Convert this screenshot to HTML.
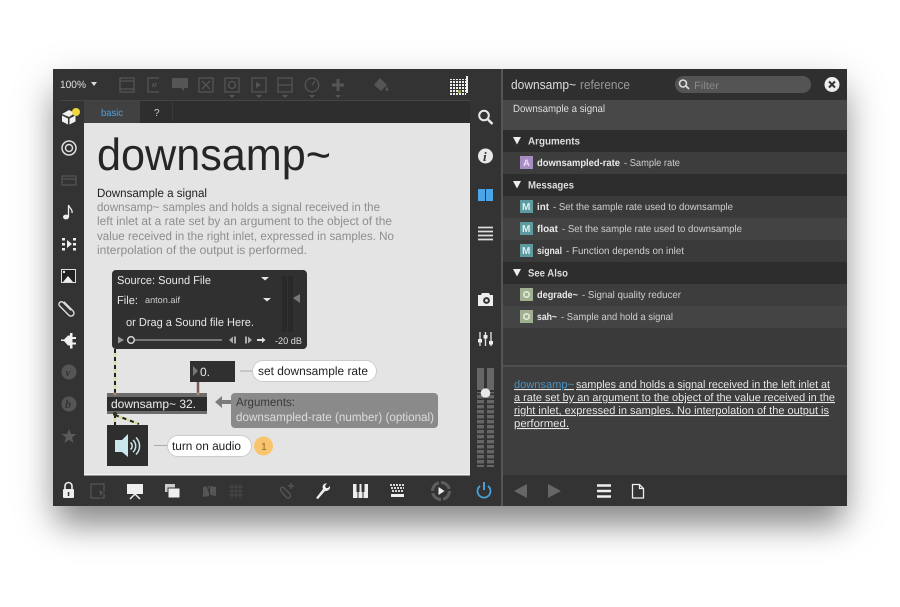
<!DOCTYPE html>
<html><head><meta charset="utf-8">
<style>
html,body{margin:0;padding:0;background:#fff;width:900px;height:607px;overflow:hidden}
#s{position:absolute;left:53px;top:69px;width:794px;height:437px;box-shadow:0 24px 28px -6px rgba(0,0,0,.3),0 14px 38px rgba(0,0,0,.26)}
svg{position:absolute;left:0;top:0;filter:blur(.35px)}
text{font-family:"Liberation Sans",sans-serif}
</style></head><body>
<div id="s"></div>
<svg width="900" height="607" viewBox="0 0 900 607" xmlns="http://www.w3.org/2000/svg" text-rendering="geometricPrecision">
<defs>
<pattern id="g" width="3" height="3" patternUnits="userSpaceOnUse"><rect width="2" height="2" fill="#eee"/></pattern>
<pattern id="m" width="4" height="5" patternUnits="userSpaceOnUse"><rect width="4" height="3.400" fill="#666"/></pattern>
</defs>
<!-- window -->
<rect x="53" y="69" width="794" height="437" fill="#333"/>
<rect x="60" y="100" width="410" height="1" fill="#454545"/>
<rect x="84" y="101" width="386" height="22" fill="#2e2e2e"/>
<rect x="84" y="101" width="56" height="22" fill="#414141"/>
<rect x="172" y="102" width="1" height="19" fill="#3a3a3a"/>
<rect x="84" y="123" width="386" height="352" fill="#e4e4e4"/>
<rect x="84" y="474" width="386" height="1.500" fill="#f4f4f4"/>
<rect x="501" y="69" width="2" height="437" fill="#555"/>
<!-- toolbar -->
<text x="60" y="88" font-size="10.500" fill="#e0e0e0" textLength="26" lengthAdjust="spacingAndGlyphs">100%</text>
<path d="M91 82h6l-3 4z" fill="#ddd"/>
<g fill="none" stroke="#555" stroke-width="1.300">
<rect x="120" y="78" width="14" height="14"/><path d="M120 81h14M120 89h14"/>
<path d="M159 78h-11v14h11"/><path d="M152 87l2-4M154.500 87l2-4" />
<rect x="199" y="78" width="14" height="14"/><path d="M202 81l8 8M210 81l-8 8"/>
<rect x="225" y="78" width="14" height="14"/><circle cx="232" cy="85" r="3.500"/>
<rect x="252" y="78" width="14" height="14"/>
<rect x="278" y="78" width="14" height="14"/><path d="M278 85h14"/>
<circle cx="312" cy="85" r="6.800"/><path d="M312 85l3-4"/>
</g>
<g fill="#555">
<path d="M172 78h16v10h-4v3l-3-3h-9z"/>
<path d="M256 82l5 3-5 3z"/>
<path d="M229 95h6l-3 3zM256 95h6l-3 3zM282 95h6l-3 3zM309 95h6l-3 3zM335 95h6l-3 3z"/>
<path d="M336.500 79h3v4.500h4.500v3h-4.500v4.500h-3v-4.500h-4.500v-3h4.500z"/>
<path d="M380 78l7 7-6 6-7-6zM387 86l1.500 3.500a1.500 1.500 0 1 1-3 0z"/>
</g>
<rect x="449" y="79" width="17" height="17" fill="url(#g)"/>
<rect x="466" y="76" width="2" height="17" fill="#eee"/>
<rect x="458" y="90" width="3" height="3" fill="#9a9a50"/>
<!-- tabs -->
<text x="101" y="116" font-size="10" fill="#4fa3dc" textLength="22" lengthAdjust="spacingAndGlyphs">basic</text>
<text x="154" y="116" font-size="10" fill="#ccc">?</text>
<!-- left sidebar -->
<path d="M62 114l7-4 6 3-6 4zM62 115.500l6 3v6l-6-3zM69.500 118.500l6-3v6l-6 3z" fill="#f0f0f0"/>
<circle cx="76" cy="112" r="4" fill="#f2d53c"/>
<g fill="none" stroke="#ddd" stroke-width="1.500"><circle cx="69" cy="148" r="7"/><circle cx="69" cy="148" r="3.500"/></g>
<g fill="none" stroke="#555" stroke-width="1.300"><rect x="62" y="176" width="14" height="9"/><path d="M62 179h14"/></g>
<ellipse cx="66" cy="217" rx="3" ry="2.400" fill="#eee"/><path d="M68.500 217v-12c.5 3 4.500 4 3.500 8" fill="none" stroke="#eee" stroke-width="1.300"/>
<path d="M62 238h3v2.500h-3zM62 243h3v2.500h-3zM62 248h3v2.500h-3zM73 238h3v2.500h-3zM73 243h3v2.500h-3zM73 248h3v2.500h-3zM67 240l5 4-5 4z" fill="#eee"/>
<rect x="61.500" y="269.500" width="14" height="13" fill="#222" stroke="#ddd"/><path d="M63 282l5-6 5 6z" fill="#eee"/><circle cx="64" cy="272" r="1.200" fill="#eee"/>
<path transform="translate(68.500,308.500) rotate(45)" d="M-8 -1.500h13a3 3 0 0 1 0 6h-13a2.500 2.500 0 0 1 0-5h11" fill="none" stroke="#ddd" stroke-width="1.400"/>
<path d="M61 339.500h3l4-4h2v-2.500h2.500v4h3.500v2h-3.500v3.500h3.500v2h-3.500v4h-2.500v-3h-2l-4-4.500h-3z" fill="#f0f0f0"/>
<circle cx="69" cy="372" r="7.500" fill="#555"/><text x="65.500" y="376" font-size="11" font-style="italic" font-weight="bold" fill="#333" style="font-family:'Liberation Serif',serif">v</text>
<circle cx="69" cy="404" r="7.500" fill="#555"/><text x="65" y="408" font-size="12" font-style="italic" font-weight="bold" fill="#333" style="font-family:'Liberation Serif',serif">b</text>
<path d="M69 429l2 5h5.500l-4.500 3.500 1.700 5.500-4.700-3.300-4.700 3.300 1.700-5.500-4.500-3.500h5.500z" fill="#5a5a5a"/>
<!-- patcher text -->
<text x="97" y="170" font-size="45" fill="#262626" textLength="234" lengthAdjust="spacingAndGlyphs">downsamp~</text>
<text x="97" y="197" font-size="12" fill="#222" textLength="110" lengthAdjust="spacingAndGlyphs">Downsample a signal</text>
<g font-size="12" fill="#8e8e8e">
<text x="97" y="211" textLength="283" lengthAdjust="spacingAndGlyphs">downsamp~ samples and holds a signal received in the</text>
<text x="97" y="225" textLength="295" lengthAdjust="spacingAndGlyphs">left inlet at a rate set by an argument to the object of the</text>
<text x="97" y="240" textLength="297" lengthAdjust="spacingAndGlyphs">value received in the right inlet, expressed in samples. No</text>
<text x="97" y="254" textLength="210" lengthAdjust="spacingAndGlyphs">interpolation of the output is performed.</text>
</g>
<!-- patch cords -->
<path d="M115 349v44M115 414v11M115 415l24 9" stroke="#d8dc9c" stroke-width="2.500" fill="none"/>
<path d="M115 349v44M115 414v11M115 415l24 9" stroke="#222" stroke-width="2" stroke-dasharray="4 4" fill="none"/>
<path d="M198 382v11" stroke="#7a5a5a" stroke-width="2.500"/>
<!-- playlist box -->
<rect x="112" y="270" width="195" height="79" rx="4" fill="#303030"/>
<g fill="#e6e6e6">
<text x="117" y="284" font-size="11.500" textLength="94" lengthAdjust="spacingAndGlyphs">Source: Sound File</text>
<text x="117" y="304" font-size="11.500" textLength="21" lengthAdjust="spacingAndGlyphs">File:</text>
<text x="145" y="303" font-size="9" textLength="35" lengthAdjust="spacingAndGlyphs" fill="#ccc">anton.aif</text>
<text x="126" y="326" font-size="11.500" textLength="128" lengthAdjust="spacingAndGlyphs">or Drag a Sound file Here.</text>
<text x="275" y="344" font-size="9.500" textLength="27" lengthAdjust="spacingAndGlyphs" fill="#ddd">-20 dB</text>
<path d="M261 277h8l-4 3.500zM263 298h8l-4 3.500z"/>
</g>
<rect x="282" y="276" width="11" height="56" fill="#292929"/>
<path d="M287.500 276v56" stroke="#333" stroke-width="1"/>
<path d="M293 298l7-4v9z" fill="#777"/>
<path d="M118 336.500l6 3.500-6 3.500z" fill="#999"/>
<rect x="135" y="339" width="87" height="2" fill="#777"/>
<circle cx="131" cy="340" r="3.300" fill="#303030" stroke="#ddd" stroke-width="1.400"/>
<path d="M236 336.500v7h-2v-7zM233 336.500v7l-4-3.500z" fill="#aaa"/>
<path d="M245 336.500h2v7h-2zM248 336.500v7l4-3.500z" fill="#aaa"/>
<path d="M257 339h5v-2l3.500 3-3.500 3v-2h-5z" fill="#ddd"/>
<!-- number box -->
<rect x="190" y="361" width="45" height="21" fill="#303030"/>
<path d="M193 366l5 5-5 5z" fill="#777"/>
<text x="200" y="376" font-size="12" fill="#e8e8e8">0.</text>
<path d="M240 371h14" stroke="#aaa"/>
<rect x="252.500" y="360.500" width="124" height="21" rx="10.500" fill="#fff" stroke="#ccc"/>
<text x="258" y="375" font-size="12" fill="#222" textLength="110" lengthAdjust="spacingAndGlyphs">set downsample rate</text>
<!-- object box -->
<rect x="107" y="393" width="100" height="21" fill="#6c6c6c"/>
<rect x="107" y="397" width="100" height="14" fill="#2c2c2c"/>
<circle cx="115" cy="394" r="1.500" fill="#a87"/><circle cx="198" cy="394" r="1.500" fill="#a87"/><circle cx="115" cy="414" r="2" fill="#332"/>
<text x="111" y="408" font-size="12" fill="#eee" textLength="85" lengthAdjust="spacingAndGlyphs">downsamp~ 32.</text>
<!-- comment -->
<path d="M215 402l7-6v4h9v4h-9v4z" fill="#7c7c7c"/>
<rect x="231" y="393" width="207" height="35" rx="4" fill="#8a8a8a"/>
<text x="236" y="406" font-size="12" fill="#3a3a3a" textLength="59" lengthAdjust="spacingAndGlyphs">Arguments:</text>
<text x="236" y="421" font-size="12" fill="#dcdcdc" textLength="198" lengthAdjust="spacingAndGlyphs">downsampled-rate (number) (optional)</text>
<!-- speaker -->
<rect x="107" y="425" width="41" height="41" fill="#2e2e2e"/>
<path d="M115 440h7l6-6v23l-6-5h-7z" fill="#c9e6ea"/>
<g fill="none" stroke="#c9e6ea" stroke-width="1.500"><path d="M130.500 442.500a4.500 4.500 0 0 1 0 7M133 440a8 8 0 0 1 0 12M136 437.500a12 12 0 0 1 0 17"/></g>
<path d="M154 445.500h14" stroke="#aaa"/>
<rect x="167.500" y="435.500" width="84" height="21" rx="10.500" fill="#fff" stroke="#ccc"/>
<text x="172" y="450" font-size="12" fill="#222" textLength="69" lengthAdjust="spacingAndGlyphs">turn on audio</text>
<circle cx="263.500" cy="446" r="9.500" fill="#f8c56e"/>
<text x="261" y="450" font-size="10.500" fill="#8a6a28">1</text>
<!-- right sidebar -->
<g fill="none" stroke="#e8e8e8" stroke-width="2"><circle cx="484" cy="115.500" r="4.800"/><path d="M488 119.500l4.500 4.500" stroke-width="2.500"/></g>
<circle cx="485.500" cy="156" r="7.500" fill="#e8e8e8"/><text x="483" y="161" font-size="13" font-style="italic" font-weight="bold" fill="#333" style="font-family:'Liberation Serif',serif">i</text>
<rect x="478" y="189" width="7" height="12" fill="#4aa6e8"/><rect x="486" y="189" width="7" height="12" fill="#4aa6e8"/>
<path d="M478 227.500h15M478 231.500h15M478 235.500h15M478 239.500h15" stroke="#ddd" stroke-width="1.800"/>
<path d="M478 295h3l1-2h7l1 2h3v11h-15z" fill="#eee"/><circle cx="486.500" cy="300.500" r="3.400" fill="#333"/><circle cx="486.500" cy="300.500" r="1.400" fill="#eee"/>
<path d="M480 332v14M485.500 332v14M491 332v14" stroke="#ddd" stroke-width="1.400"/>
<g fill="#eee"><rect x="478" y="339" width="4" height="3.500"/><rect x="483.500" y="335" width="4" height="3.500"/><rect x="489" y="341" width="4" height="3.500"/></g>
<!-- volume -->
<rect x="477" y="368" width="7" height="22" fill="#666"/><rect x="487" y="368" width="7" height="22" fill="#666"/>
<rect x="477" y="392" width="7" height="75" fill="url(#m)"/><rect x="487" y="392" width="7" height="75" fill="url(#m)"/>
<circle cx="485.500" cy="393" r="4.800" fill="#e8e8e8"/>
<!-- bottom bar -->
<path d="M65 489v-3a3.500 3.500 0 0 1 7 0v3" fill="none" stroke="#eee" stroke-width="1.600"/><rect x="63" y="489" width="11" height="9" rx="1" fill="#eee"/><rect x="67.800" y="492" width="1.500" height="4" fill="#333"/>
<rect x="91" y="484" width="13" height="14" fill="none" stroke="#555" stroke-width="1.300"/><path d="M98 489l7 4-3 1-1 4z" fill="#555" stroke="#333"/>
<path d="M127 484h16v10h-16z" fill="#eee"/><path d="M130 499l5-5 5 5" fill="none" stroke="#eee" stroke-width="1.500"/>
<rect x="165" y="484" width="10" height="8" fill="#ccc"/><rect x="168" y="488" width="12" height="10" fill="#eee" stroke="#333"/>
<path d="M203 487l6-1v10l-6 1zM210 486l6 1v9l-6-1z" fill="#555"/><path d="M206 483l6 17" stroke="#333"/>
<path d="M229 487h14M229 491h14M229 495h14M232 484v14M236 484v14M240 484v14" stroke="#4a4a4a"/>
<path d="M286 497l-5-6a2 2 0 0 1 3-3l6 6a2.500 2.500 0 0 1-4 3" fill="none" stroke="#555" stroke-width="1.400"/><path d="M288 486h6M291 483v6" stroke="#555" stroke-width="1.400"/>
<path d="M316 498l7-9a4.500 4.500 0 0 1 1-5l3-1-2 3 1 2 2 0 2-2 0 2a4.500 4.500 0 0 1-5 3l-7 8z" fill="#eee"/>
<rect x="353" y="484" width="15" height="14" fill="#eee"/><path d="M358 484v14M363 484v14" stroke="#333"/><rect x="356.500" y="484" width="3" height="8" fill="#333"/><rect x="361.500" y="484" width="3" height="8" fill="#333"/>
<path d="M390 485h15M391 488h13M392 491h11" stroke="#eee" stroke-width="1.800" stroke-dasharray="2 1"/><rect x="391" y="494" width="13" height="3" fill="#eee"/>
<circle cx="441" cy="491" r="8.500" fill="none" stroke="#5e5e5e" stroke-width="3" stroke-dasharray="11 2.300"/>
<path d="M438.500 487l6 4-6 4z" fill="#eee"/>
<path d="M480 486a6.500 6.500 0 1 0 8 0" fill="none" stroke="#4a9fd8" stroke-width="1.800"/><path d="M484 482v8" stroke="#4a9fd8" stroke-width="2"/>
<!-- reference panel -->
<rect x="503" y="69" width="344" height="31" fill="#2f2f2f"/>
<rect x="503" y="100" width="344" height="30" fill="#484848"/>
<rect x="503" y="130" width="344" height="22" fill="#2d2d2d"/>
<rect x="503" y="152" width="344" height="22" fill="#3d3d3d"/>
<rect x="503" y="174" width="344" height="22" fill="#2d2d2d"/>
<rect x="503" y="196" width="344" height="22" fill="#3a3a3a"/>
<rect x="503" y="218" width="344" height="22" fill="#434343"/>
<rect x="503" y="240" width="344" height="22" fill="#3a3a3a"/>
<rect x="503" y="262" width="344" height="22" fill="#2d2d2d"/>
<rect x="503" y="284" width="344" height="22" fill="#3d3d3d"/>
<rect x="503" y="306" width="344" height="22" fill="#444"/>
<rect x="503" y="328" width="344" height="37" fill="#3a3a3a"/>
<rect x="503" y="365" width="344" height="2" fill="#4e4e4e"/>
<rect x="503" y="367" width="344" height="108" fill="#3e3e3e"/>
<rect x="503" y="475" width="344" height="31" fill="#333"/>
<text x="511" y="89" font-size="13" fill="#ddd" textLength="65" lengthAdjust="spacingAndGlyphs">downsamp~</text>
<text x="580" y="89" font-size="13" fill="#999" textLength="50" lengthAdjust="spacingAndGlyphs">reference</text>
<rect x="675" y="76" width="136" height="17" rx="8.500" fill="#545454"/>
<circle cx="683" cy="83.500" r="3.500" fill="none" stroke="#ddd" stroke-width="1.600"/><path d="M686 86l3 3" stroke="#ddd" stroke-width="1.800"/>
<text x="694" y="89" font-size="10.500" fill="#8a8a8a" textLength="25" lengthAdjust="spacingAndGlyphs">Filter</text>
<circle cx="832" cy="84.500" r="7.500" fill="#eee"/><path d="M829 81.500l6 6M835 81.500l-6 6" stroke="#333" stroke-width="2"/>
<text x="513" y="112" font-size="10.500" fill="#ddd" textLength="92" lengthAdjust="spacingAndGlyphs">Downsample a signal</text>
<g fill="#eee"><path d="M513 137h8l-4 7.500zM513 181h8l-4 7.500zM513 269h8l-4 7.500z"/></g>
<g font-size="10.500" fill="#ddd" font-weight="bold">
<text x="528" y="144.500" textLength="52" lengthAdjust="spacingAndGlyphs">Arguments</text>
<text x="528" y="188.500" textLength="46" lengthAdjust="spacingAndGlyphs">Messages</text>
<text x="528" y="276.500" textLength="40" lengthAdjust="spacingAndGlyphs">See Also</text>
</g>
<rect x="520" y="156" width="13" height="13" fill="#a88dc2"/><text x="523" y="166" font-size="9.500" font-weight="bold" fill="#e8e0f0">A</text>
<g fill="#5c9ca0"><rect x="520" y="200" width="13" height="13"/><rect x="520" y="222" width="13" height="13"/><rect x="520" y="244" width="13" height="13"/></g>
<g font-size="10" font-weight="bold" fill="#e4f0f0"><text x="522" y="210">M</text><text x="522" y="232">M</text><text x="522" y="254">M</text></g>
<g fill="#a0b090"><rect x="520" y="288" width="13" height="13"/><rect x="520" y="310" width="13" height="13"/></g>
<g fill="none" stroke="#e4eadc" stroke-width="1.600"><circle cx="526.500" cy="294.500" r="2.700"/><circle cx="526.500" cy="316.500" r="2.700"/></g>
<g font-size="10" fill="#cfcfcf">
<text x="537" y="166" font-weight="bold" fill="#e8e8e8" textLength="83" lengthAdjust="spacingAndGlyphs">downsampled-rate</text>
<text x="624" y="166" textLength="56" lengthAdjust="spacingAndGlyphs">- Sample rate</text>
<text x="537" y="210" font-weight="bold" fill="#e8e8e8" textLength="12" lengthAdjust="spacingAndGlyphs">int</text>
<text x="553" y="210" textLength="180" lengthAdjust="spacingAndGlyphs">- Set the sample rate used to downsample</text>
<text x="537" y="232" font-weight="bold" fill="#e8e8e8" textLength="21" lengthAdjust="spacingAndGlyphs">float</text>
<text x="562" y="232" textLength="180" lengthAdjust="spacingAndGlyphs">- Set the sample rate used to downsample</text>
<text x="537" y="254" font-weight="bold" fill="#e8e8e8" textLength="25" lengthAdjust="spacingAndGlyphs">signal</text>
<text x="566" y="254" textLength="118" lengthAdjust="spacingAndGlyphs">- Function depends on inlet</text>
<text x="537" y="298" font-weight="bold" fill="#e8e8e8" textLength="41" lengthAdjust="spacingAndGlyphs">degrade~</text>
<text x="582" y="298" textLength="99" lengthAdjust="spacingAndGlyphs">- Signal quality reducer</text>
<text x="537" y="320" font-weight="bold" fill="#e8e8e8" textLength="20" lengthAdjust="spacingAndGlyphs">sah~</text>
<text x="561" y="320" textLength="112" lengthAdjust="spacingAndGlyphs">- Sample and hold a signal</text>
</g>
<g font-size="11" fill="#e6e6e6" text-decoration="underline">
<text x="514" y="388" fill="#4a94c4" textLength="60" lengthAdjust="spacingAndGlyphs">downsamp~</text>
<text x="576" y="388" textLength="254" lengthAdjust="spacingAndGlyphs">samples and holds a signal received in the left inlet at</text>
<text x="514" y="401" textLength="321" lengthAdjust="spacingAndGlyphs">a rate set by an argument to the object of the value received in the</text>
<text x="514" y="414" textLength="315" lengthAdjust="spacingAndGlyphs">right inlet, expressed in samples. No interpolation of the output is</text>
<text x="514" y="427" textLength="55" lengthAdjust="spacingAndGlyphs">performed.</text>
</g>
<path d="M527 484v14l-13-7zM548 484v14l13-7z" fill="#666"/>
<path d="M597 485.500h14M597 491h14M597 496.500h14" stroke="#eee" stroke-width="2.600"/>
<path d="M632.500 484.500h7l4 4v9.500h-11zM639.500 484.500v4h4" fill="none" stroke="#eee" stroke-width="1.300"/>
</svg>
</body></html>
